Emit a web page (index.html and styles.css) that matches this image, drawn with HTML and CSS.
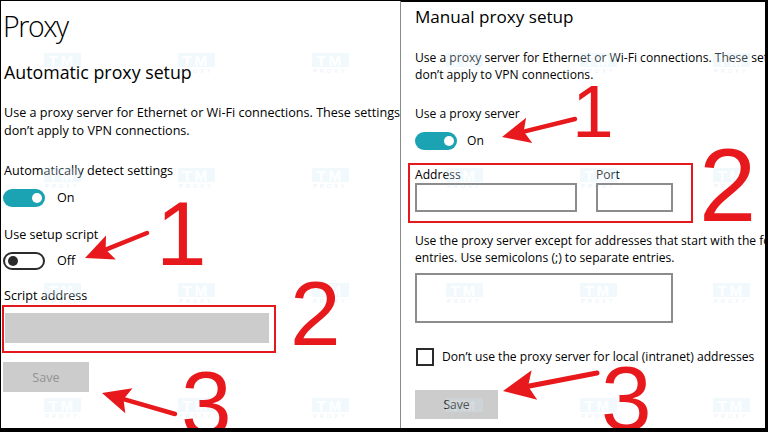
FILE: index.html
```html
<!DOCTYPE html>
<html lang="en">
<head>
<meta charset="utf-8">
<title>Proxy</title>
<link rel="stylesheet" href="styles.css">
</head>
<body>
<div class="frame">
  <section class="panel panel-left">
    <h1 class="title">Proxy</h1>
    <h2 class="heading">Automatic proxy setup</h2>
    <p class="desc"><span class="line">Use a proxy server for Ethernet or Wi-Fi connections. These settings</span><span class="line">don’t apply to VPN connections.</span></p>
    <div class="label l-detect">Automatically detect settings</div>
    <div class="toggle-row tr-detect"><span class="toggle on"><span class="knob"></span></span><span class="state">On</span></div>
    <div class="label l-script">Use setup script</div>
    <div class="toggle-row tr-script"><span class="toggle off"><span class="knob"></span></span><span class="state">Off</span></div>
    <div class="label l-addr">Script address</div>
    <div class="redbox rb-left"><div class="field-disabled"></div></div>
    <button class="btn btn-disabled">Save</button>
  </section>
  <div class="divider"></div>
  <section class="panel panel-right">
    <h2 class="heading heading-r">Manual proxy setup</h2>
    <p class="desc desc-r"><span class="line">Use a proxy server for Ethernet or Wi-Fi connections. These settings</span><span class="line">don’t apply to VPN connections.</span></p>
    <div class="label l-use">Use a proxy server</div>
    <div class="toggle-row tr-use"><span class="toggle on"><span class="knob"></span></span><span class="state">On</span></div>
    <div class="redbox rb-right">
      <div class="col col-addr"><div class="label-s">Address</div><div class="input"></div></div>
      <div class="col col-port"><div class="label-s">Port</div><div class="input"></div></div>
    </div>
    <p class="desc desc-r desc-except"><span class="line">Use the proxy server except for addresses that start with the following</span><span class="line">entries. Use semicolons (;) to separate entries.</span></p>
    <div class="textarea"></div>
    <div class="check-row"><span class="checkbox"></span><span class="check-label">Don’t use the proxy server for local (intranet) addresses</span></div>
    <button class="btn btn-save">Save</button>
  </section>
</div>
<div class="overlay">
  <svg class="overlay-svg" width="768" height="428" viewBox="0 0 768 428">
    <defs>
      <g id="wm">
        <rect x="0" y="0" width="37" height="14" fill="#cdeaf7"/>
        <text x="18.5" y="12.5" text-anchor="middle" class="wm-tm">TM</text>
        <text x="18.5" y="20" text-anchor="middle" class="wm-proxy">PROXY</text>
      </g>
    </defs>
    <g class="wms">
      <use href="#wm" x="44" y="53"/><use href="#wm" x="178" y="53"/><use href="#wm" x="312" y="53"/><use href="#wm" x="446" y="53"/><use href="#wm" x="580" y="53"/><use href="#wm" x="713" y="53"/>
      <use href="#wm" x="44" y="168"/><use href="#wm" x="178" y="168"/><use href="#wm" x="312" y="168"/><use href="#wm" x="446" y="168"/><use href="#wm" x="580" y="168"/><use href="#wm" x="713" y="168"/>
      <use href="#wm" x="44" y="283"/><use href="#wm" x="178" y="283"/><use href="#wm" x="312" y="283"/><use href="#wm" x="446" y="283"/><use href="#wm" x="580" y="283"/><use href="#wm" x="713" y="283"/>
      <use href="#wm" x="44" y="398"/><use href="#wm" x="178" y="398"/><use href="#wm" x="312" y="398"/><use href="#wm" x="446" y="398"/><use href="#wm" x="580" y="398"/><use href="#wm" x="713" y="398"/>
    </g>
    <g class="arrows">
      <line x1="147" y1="233" x2="105.7" y2="249.6" class="shaft"/>
      <polygon points="85,258 115.8,259.6 105.7,249.6 106,235.6"/>
      <line x1="175" y1="414" x2="123.5" y2="399.2" class="shaft"/>
      <polygon points="102,393 132.5,388.2 123.5,399.2 125.3,413.2"/>
      <line x1="575" y1="119" x2="523.7" y2="131.6" class="shaft"/>
      <polygon points="502,137 526.1,117.7 523.7,131.6 532.3,142.9"/>
      <line x1="597" y1="373" x2="528.1" y2="386.2" class="shaft shaft-b"/>
      <polygon points="503,391 531.6,370.3 528.1,386.2 537.2,399.7"/>
    </g>
    <g class="digits">
      <text x="156" y="265" class="d91">1</text>
      <text x="290" y="345" class="d91">2</text>
      <text x="181" y="435" class="d91">3</text>
      <text x="572" y="137" class="d75">1</text>
      <text x="699" y="221" class="d103">2</text>
      <text x="601" y="430" class="d91">3</text>
    </g>
  </svg>
</div>
</body>
</html>
```

FILE: styles.css
```css
* { box-sizing: border-box; margin: 0; padding: 0; }
html, body { width: 768px; height: 432px; }
body {
  background: #000;
  overflow: hidden;
  position: relative;
  font-family: "Open Sans", "Noto Sans", sans-serif;
  color: #000;
}
.frame { display: flex; align-items: flex-start; height: 432px; }
.panel {
  background: #fff;
  overflow: hidden;
  display: flex;
  flex-direction: column;
  align-items: flex-start;
}
.panel-left { margin: 1px 0 0 1px; width: 399px; height: 427px; padding-left: 3px; }
.divider { width: 1px; height: 427px; margin-top: 1px; background: #8a8a8a; }
.panel-right { margin-top: 2px; width: 364px; height: 426px; padding-left: 14px; }

.title {
  font-weight: 300;
  font-size: 28.5px;
  line-height: 32px;
  letter-spacing: -1.4px;
  margin-top: 9px;
  margin-left: -1px;
}
.heading {
  font-weight: 400;
  font-size: 17.8px;
  line-height: 24px;
  margin-top: 18px;
  white-space: nowrap;
}
.heading-r { font-size: 17.1px; margin-top: 3px; }
.desc { font-size: 12.6px; line-height: 18px; margin-top: 20px; }
.desc-r { font-size: 12.1px; line-height: 17px; margin-top: 20px; }
.line { display: block; white-space: nowrap; }

.label { font-size: 12.6px; line-height: 18px; white-space: nowrap; }
.l-detect { margin-top: 22px; }
.l-script { margin-top: 19px; }
.l-addr { margin-top: 17px; }
.l-use { font-size: 12.1px; line-height: 17px; margin-top: 22px; }

.toggle-row { display: flex; align-items: center; height: 18px; margin-left: -1px; }
.tr-detect { margin-top: 9px; }
.tr-script { margin-top: 8px; }
.tr-use { margin-top: 10px; margin-left: 0; }
.toggle {
  width: 42px; height: 18px; border-radius: 9px;
  display: flex; align-items: center;
}
.toggle.on { background: #1ba3b3; justify-content: flex-end; padding-right: 3px; }
.toggle.off { border: 2px solid #2b2b2b; padding-left: 3px; }
.knob { width: 10px; height: 10px; border-radius: 50%; }
.toggle.on .knob { background: #fff; }
.toggle.off .knob { background: #2b2b2b; }
.state { font-size: 12.6px; line-height: 18px; margin-left: 12px; }
.tr-use .state { font-size: 12.1px; margin-left: 10px; }

.redbox { border: 2px solid #e3191e; }
.rb-left { margin-left: -2px; width: 274px; padding: 6px 5px 8px 1px; }
.field-disabled { width: 264px; height: 30px; background: #cccccc; }

.btn {
  border: none;
  font-family: inherit;
  background: #cccccc;
  display: flex; align-items: center; justify-content: center;
}
.btn-disabled { margin-top: 9px; margin-left: -1px; width: 86px; height: 30px; font-size: 12.6px; color: #939393; }
.btn-save { margin-top: 24px; width: 83px; height: 29px; font-size: 12.1px; color: #111; }

.rb-right {
  margin-top: 13px; margin-left: -7px;
  width: 285px; height: 60px;
  padding: 1px 18px 9px 5px;
  display: flex; gap: 19px;
}
.col-addr { width: 162px; }
.col-port { width: 77px; }
.label-s { font-size: 12.1px; line-height: 17px; white-space: nowrap; }
.input { height: 29px; border: 2px solid #8c8c8c; }

.desc-except { margin-top: 9px; }
.textarea { margin-top: 7px; width: 258px; height: 50px; border: 2px solid #8c8c8c; }

.check-row { margin-top: 25px; display: flex; align-items: center; height: 18px; }
.checkbox { width: 18px; height: 18px; border: 2px solid #2b2b2b; margin-left: 1px; }
.check-label { margin-left: 8px; font-size: 12.1px; line-height: 18px; white-space: nowrap; }

.overlay {
  position: absolute; left: 0; top: 0;
  width: 768px; height: 428px;
  overflow: hidden;
  pointer-events: none;
}
.overlay-svg { display: block; }
.wms { opacity: 0.28; }
.wm-tm { font-family: "Liberation Sans", sans-serif; font-weight: 700; font-size: 15px; letter-spacing: 3px; fill: #ffffff; }
.wm-proxy { font-family: "Liberation Sans", sans-serif; font-size: 5.5px; letter-spacing: 3px; fill: #9cc7da; }
.arrows polygon { fill: #e8191c; }
.arrows .shaft { stroke: #e8191c; stroke-width: 4.5; stroke-linecap: round; }
.arrows .shaft-b { stroke-width: 5; }
.digits text { font-family: "Liberation Sans", Arial, sans-serif; fill: #e8191c; }
.d91 { font-size: 91px; }
.d75 { font-size: 75px; }
.d103 { font-size: 103px; }
```
